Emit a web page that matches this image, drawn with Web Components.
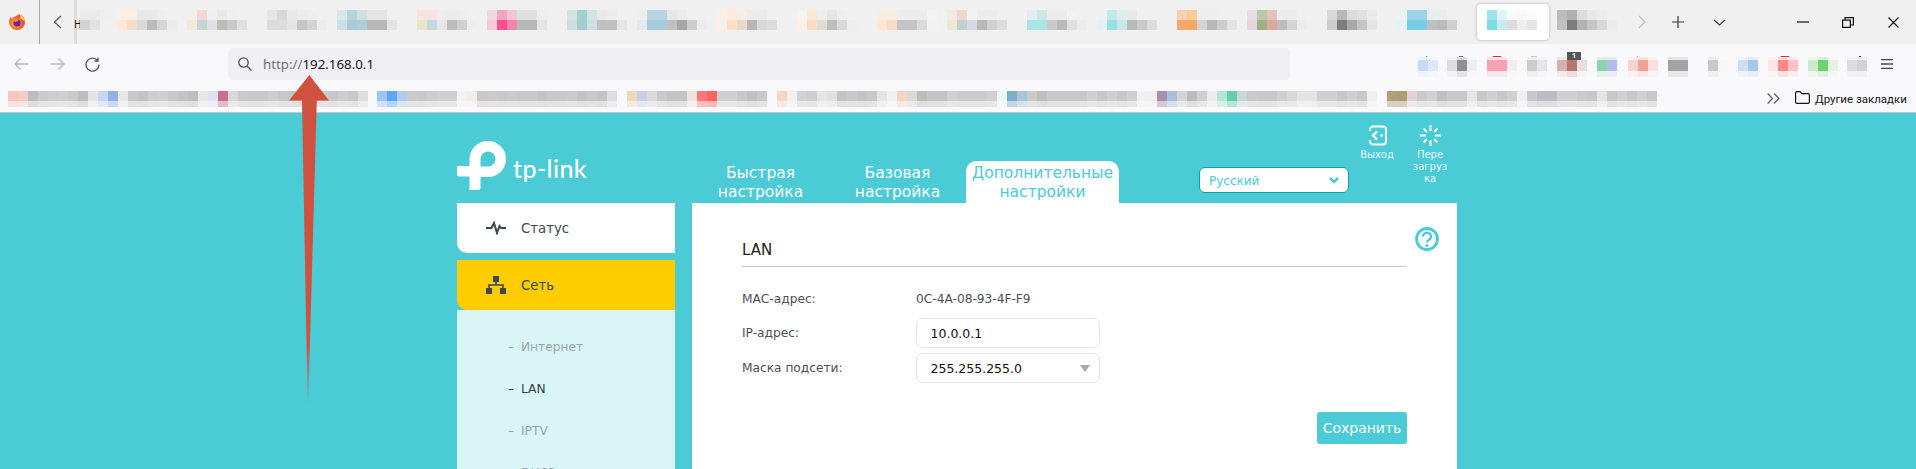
<!DOCTYPE html>
<html lang="ru"><head><meta charset="utf-8"><title>LAN</title>
<style>
html,body{margin:0;padding:0;height:469px;width:1916px;overflow:hidden;background:#4acbd6;font-family:"DejaVu Sans",sans-serif}
</style></head><body>
<browser-chrome></browser-chrome>
<router-page></router-page>
<red-arrow></red-arrow>
<script>
function mix(hex,bg,t){const p=s=>[1,3,5].map(i=>parseInt(s.substr(i,2),16));const a=p(hex),b=p(bg);return '#'+a.map((v,i)=>Math.round(v+(b[i]-v)*t).toString(16).padStart(2,'0')).join('')}
class PixelMosaic extends HTMLElement{
  connectedCallback(){
    const cell=+(this.getAttribute('cell')||10);
    const rows=this.getAttribute('colors').split('|').map(r=>r.trim().split(/\s+/));
    const hs=(this.getAttribute('heights')||'10,10').split(',');
    const s=this.attachShadow({mode:'open'});
    let h='<style>:host{display:block;flex:none}.r{display:flex}.r i{display:block;flex:none;width:'+cell+'px}</style>';
    rows.forEach((r,k)=>{h+='<div class="r" style="height:'+hs[k]+'px">'+r.map(c=>'<i style="background:#'+c+'"></i>').join('')+'</div>'});
    s.innerHTML=h;
  }
}
customElements.define('pixel-mosaic',PixelMosaic);

const TABS=[
[80,37,'ebebeb ebebeb efefef','d4d4d4 e2e2e2 f0f0f0'],
[117,70,'fbeee3 fbeee3 e9e9e9 e9e9e9 eeeeee f0f0f0','ffe9d5 f5dcc8 dadada bbbbbb d5d5d5 ececec'],
[187,80,'f6eeee f3d5d5 efefef e9e9e9 efefef f0f0f0','f0ebd6 c5d5d3 dfdfe6 bcbcbc c8c8c8 e0e0e0'],
[267,70,'e6e6e6 d8d8d8 e8e8e8 ececec eeeeee f0f0f0','dcdcdc dcdcdc e5e5e5 c6c6c6 d2d2d2 ececec'],
[337,80,'d8e7ea b5d3dc cde0e3 e4e4e4 e4e4e4 f0f0f0','cbe0e6 a9cbd9 aecdd9 b8b8b8 b8b8b8 e4e4e4'],
[417,70,'f4e4e4 f4e4e4 eeeeee ececec eeeeee f0f0f0','ebe5c8 c7d7e4 e6e6e6 bcbcbc cfcfcf eeeeee'],
[487,80,'f0d8e0 efa7c0 efc6d7 e0e0e0 e0e0e0 eeeeee','f3cbd7 fb4f8d f584ad b8b8b8 b8b8b8 e4e4e4'],
[567,70,'d2e4e1 a3cfcf d2e3e3 e9e9e9 ececec f0f0f0','ccdede a5cdd1 cde0e0 c0c0c0 c0c0c0 e5e5e5'],
[637,80,'eeeeee b9d4df b9d4df e4e8ea ececec f0f0f0 f0f0f0','e1eaec a8cbdc a8cbdc c0c0c0 a6a6a6 cdcdcd ececec'],
[717,80,'f6f0e9 fbeadd f3eee8 ebebeb ebebeb f0f0f0','f7f0e8 fedfc4 e9d9cb b6b6b6 d8d8d8 dcdcdc f0f0f0'],
[797,80,'f6f2ec fae7d6 eeeeee e6e6e6 eeeeee f0f0f0','f9f0e5 fbdcc1 e1dbd4 bdbdbd d9d9d9 eeeeee'],
[877,70,'f9ece0 f9ece0 ededed ededed ededed f3f3f3','fee6d0 f6dcc8 c4c4c4 c4c4c4 dadada f2f2f2'],
[947,80,'f3e7e7 f1d5d3 f2f2f2 ededed ededed f0f0f0','ede9cf c2d1d0 d5dbe3 b8b8b8 d0d0d0 dcdcdc'],
[1027,70,'e0eeee c8e9e7 ebebeb ebebeb f2f2f2 f0f0f0','aae5e6 aae5e6 cacaca b9b9b9 e0e0e0 ececec'],
[1097,80,'f0f0f0 c2e9ea dceeee e8e8e8 f0f0f0 f0f0f0','e4f1f2 95e2e3 cae6e6 bababa c9c9c9 dcdcdc'],
[1177,70,'f5d3b0 f5cd95 eeeeee eeeeee f0f0f0 f0f0f0','f6a76d f6a862 d4d4d4 b8b8b8 cdcdcd e2e2e2'],
[1247,80,'e8dde4 bcc8a6 e7c0bc ededed ededed f0f0f0','e5d5dc 9fb287 e0a6a0 bdbdbd d4d4d4 ececec'],
[1327,70,'d8d8d8 b8b8b8 dcdcdc e0e0e0 eaeaea f0f0f0','cccccc 7d7d7d a8a8a8 c5c5c5 e5e5e5 f0f0f0'],
[1397,80,'f0f0f0 9ed4e8 9ed4e8 e6eef1 ececec f0f0f0','e5f1f4 78cdea 78cdea bbbfc0 bbbbbb d0d0d0'],
[1477,80,'9fe4e8 def5f6 fafafa f8f8f8 fbfbfb','7cdcdf c7ecee dcdcdc eeeeee e5e5e5'],
[1557,73,'bcbcbc b0b0b0 dcdcdc e8e8e8 ededed f0f0f0','c0c0c0 7d7d7d b2b2b2 c5c5c5 d8d8d8 ececec']
];
class TabBar extends HTMLElement{
  constructor(){super();const s=this.attachShadow({mode:'open'});
  const cells=TABS.map((t,i)=>{const act=t[0]===1477;
    return `<div class="tab${act?' act':''}" style="width:${t[1]}px"><pixel-mosaic colors="${t[2]}|${t[3]}"></pixel-mosaic></div>`}).join('');
  s.innerHTML=`<style>
  :host{display:flex;height:44px;background:#f0f0f0;align-items:stretch;color:#3a3a40}
  .fx{width:39px;flex:none;border-right:1px solid #a9a9a9;display:flex;align-items:center;justify-content:center}
  .fx svg{margin-left:-5px}
  .bk{width:34px;flex:none;display:flex;align-items:center;justify-content:center}
  .cut{width:6px;flex:none;overflow:hidden;background:linear-gradient(90deg,#dcdcdc 0 3px,transparent 3px);font:10px/48px "Noto Sans",sans-serif;color:#111;text-align:left}
  .strip{display:flex;width:1550px;flex:none}
  .tab{flex:none;box-sizing:border-box;padding-top:10px}
  .act{padding:0;position:relative}
  .act pixel-mosaic{position:relative}
  .act::before{content:"";display:block;width:72px;height:36px;margin:4px 0 -30px;background:#fff;border-radius:4px;box-shadow:0 0 3px rgba(0,0,0,.3)}
  .act pixel-mosaic{margin-left:10px}
  .btn{flex:none;display:flex;align-items:center;justify-content:center}
  .sp{flex:1}
  svg{display:block;fill:none;stroke:currentColor;stroke-width:1.2}
  </style>
  <div class="fx"><svg width="18" height="18" viewBox="0 0 18 18" style="stroke:none"><defs><radialGradient id="g" cx=".4" cy=".6" r=".7"><stop offset="0" stop-color="#ffbd2e"/><stop offset=".55" stop-color="#ff6a1f"/><stop offset="1" stop-color="#e3127b"/></radialGradient></defs><path d="M11 1c3.500 1.500 6 4.500 6 8a8 8 0 1 1-16 0c0-2 .8-4 2-5l1 2c1-2 3-2.500 4-3 1.500-.5 2.500-1 3-2z" fill="url(#g)"/><path d="M11 1c3 1.500 6 4.500 6 8-1-1.500-2.500-3-5-3.500.5-1.500 0-3-1-4.500z" fill="#ffd23a"/><circle cx="9" cy="10" r="3.600" fill="#5b2bb5"/><path d="M5 8c1-2 4-2 6-1l-3 2z" fill="#ff8a2a"/></svg></div>
  <div class="bk"><svg width="9" height="14" viewBox="0 0 9 14" style="color:#5b5b66;stroke-width:1.300"><path d="M8 1 1.500 7 8 13"/></svg></div>
  <div class="cut">Н</div>
  <div class="strip">${cells}</div>
  <div class="btn" style="width:24px;color:#bdbdc2"><svg width="8" height="14" viewBox="0 0 8 14"><path d="M1 1 7 7 1 13"/></svg></div>
  <div class="btn" style="width:48px"><svg width="14" height="14" viewBox="0 0 14 14"><path d="M7 1V13M1 7H13"/></svg></div>
  <div class="btn" style="width:34px"><svg width="13" height="7" viewBox="0 0 13 7"><path d="M1 1 6.500 6 12 1"/></svg></div>
  <div class="sp"></div>
  <div class="btn" style="width:45px;color:#111"><svg width="12" height="2" viewBox="0 0 12 2"><path d="M0 1H12"/></svg></div>
  <div class="btn" style="width:46px;color:#111"><svg width="12" height="11" viewBox="0 0 12 11"><path d="M.6 3.100H8.300V10.400H.6ZM3 3V.6H11.400V8H8.300"/></svg></div>
  <div class="btn" style="width:45px;color:#111"><svg width="11" height="11" viewBox="0 0 11 11"><path d="M.5.5 10.500 10.500M10.500.5.5 10.500"/></svg></div>`;}
}
customElements.define('tab-bar',TabBar);

const TOOLS=[
[29,'c9daf5 dfe9f8','#2a6fe0',8,1],
[40,'dddddd 8f8f98 eeeeee','#777',12,4],
[40,'f5a0b3 f5a0b3 f5eef0','#f22',6,8],
[30,'cccccc e5e5e5','#ccc',4,6],
[40,'d4b0b0 b87575 e9dede','',0,0],
[31,'8ed3ab b2bce6','',0,0],
[40,'f7d3d0 f2a197 f9e0de','#f88',9,1],
[40,'a3a3a3 a3a3a3','',0,0],
[30,'c8c8c8 f7f7f7','',0,0],
[30,'cfdcf2 a8c6ec','',0,0],
[40,'fbe6e6 ff8888 ffc2c2','#f22',13,8],
[39,'cdeacb 6fd26f e3f2e3','',0,0],
[40,'dcdce0 d2d2d6','#555',12,2]
];
class NavToolbar extends HTMLElement{
  constructor(){super();const s=this.attachShadow({mode:'open'});
  const items=TOOLS.map((t,i)=>{const top=t[1].split(' ').map(c=>mix('#'+c,'#f9f9fb',.75).slice(1)).join(' ');
    const bot=t[1].split(' ').map(c=>mix('#'+c,'#f9f9fb',.8).slice(1)).join(' ');
    const dot=t[2]?`<b style="background:${t[2]};left:${t[3]}px;width:${t[4]}px"></b>`:'';
    const badge=i===4?'<em>1</em>':'';
    return `<div class="it" style="width:${t[0]}px">${dot}${badge}<pixel-mosaic colors="${top}|${t[1]}|${bot}" heights="3,11,6"></pixel-mosaic></div>`}).join('');
  s.innerHTML=`<style>
  :host{display:flex;height:46px;background:#f9f9fb;box-sizing:border-box;padding:4px 0 10px 4px;align-items:stretch}
  .nb{width:35.500px;flex:none;display:flex;align-items:center;justify-content:center}
  svg{display:block;fill:none;stroke:currentColor;stroke-width:1.300}
  .url{flex:none;margin-left:117.500px;width:1062px;background:#f0f0f4;border-radius:4px;display:flex;align-items:center;box-sizing:border-box;padding-left:10px;font:13.300px "Noto Sans",sans-serif;color:#15141a}
  .url svg{margin-right:11px;color:#4d4d55}
  .url span{color:#6e6e76}
  .tools{flex:none;margin-left:128px;display:flex;align-items:flex-start;padding-top:9px}
  .it{position:relative;flex:none}
  .it b{position:absolute;top:-1px;height:1px;display:block}
  .it em{position:absolute;z-index:1;left:10px;top:-5px;width:14px;height:8px;background:#555;color:#fff;font:bold 7px/8px "Noto Sans",sans-serif;text-align:center}
  .ham{flex:none;margin-left:-6px;display:flex;align-items:center;color:#45454d}
  </style>
  <div class="nb" style="color:#b9b9be"><svg width="15" height="12" viewBox="0 0 15 12"><path d="M14.500 6H1M6.500.5 1 6l5.500 5.500"/></svg></div>
  <div class="nb" style="color:#b9b9be"><svg width="15" height="12" viewBox="0 0 15 12"><path d="M.5 6H14M8.500.5 14 6l-5.500 5.500"/></svg></div>
  <div class="nb" style="color:#55555e"><svg width="15" height="15" viewBox="0 0 15 15"><path d="M12.500 3.500A6.500 6.500 0 1 0 14 7.500M13 .5V4H9.500"/></svg></div>
  <div class="url"><svg width="14" height="14" viewBox="0 0 14 14"><circle cx="5.500" cy="5.500" r="4.700"/><path d="M9 9 13.500 13.500"/></svg><div><span>http://</span>192.168.0.1</div></div>
  <div class="tools">${items}</div>
  <div class="ham"><svg width="12" height="10" viewBox="0 0 12 10"><path d="M0 .7H12M0 5H12M0 9.300H12"/></svg></div>`;}
}
customElements.define('nav-toolbar',NavToolbar);

const BM=[
[8,'f7c4be f4cbc6 bdbdbd cacaca cecece d0d0d0 cacaca bebebe e4e4e4 c4d8f6 90b0e6 e8e8e8 c8c8c8 c4c4c4 cecece d0d0d0 c8c8c8 c4c4c4 bebebe e8e8e8 e0e0f0 c96f90 d8d8d8 cacaca c8c8c8 c8c8c8 cecece c8c8c8 c4c4c4 c4c4c4 c8c8c8 cccccc c8c8c8 cecece c8c8c8 dedede'],
[377,'9cc4f8 5da6fb b0cbec cacaca c8c8c8 cdcdcd d0d0d0 d0d0d0 f2f2f2 f3eeee cfc6c6 cacaca c8c8c8 cacaca c8c8c8 c8c8c8 c4c4c4 c8c8c8 c8c8c8 cacaca c4c4c4 c8c8c8 c4c4c4 dedede'],
[627,'ecd9b8 c8d0e4 dadada cacaca c4c4c4 c4c4c4 f2e0e0 ff7878 ff6464 d0d0d0 d0d0d0 c8c8c8 c0c0c0 c8c8c8'],
[777,'f4d6c4 f6eeee d2d2d2 cecece e4e4e4 e0e0e0 c4c4c4 c8c8c8 c4c4c4 c8c8c8 e4e4e4 f5f0f0 f4d5c4 dcd8d4 bcbcbc c4c4c4 c4c4c4 d0d0d0 cccccc cccccc cccccc d0d0d0 f0f5f8 7eaecb a8c4d8 cacaca bebebe c8c8c8 c8c8c8 c8c8c8 c8c8c8 d0d0d0 c8c8c8 d0d0d0 c8c8c8 d0d0d0 f0f0f0 f4eef0 a890ac a8c0dc d4d4d8 bcbcbc d0d0d0 ececec b2e5d4 64cdaa c8d8d4 cacaca c8c8c8 c8c8c8 d0d0d0 d8d8d8 e4e4e4 e4e4e4 d0d0d0 d0d0d0 c8c8c8 d0d0d0 c8c8c8 f0f0f0'],
[1387,'b0a078 b09e70 e0d0d8 cacaca d0d0d0 c0c0c0 c8c8c8 c8c8c8 e4e4e4 c8c8c8 d0d0d0 c8c8c8 d0d0d0 f0f0f0 c8c8d0 bcbcc4 bcbcc4 d0d0d0 d0d0d0 cacaca c8c8c8 e4e4e4 c8c8c8 d0d0d0 c8c8c8 d0d0d0 c8c8c8']
];
class BookmarksBar extends HTMLElement{
  constructor(){super();const s=this.attachShadow({mode:'open'});
  let x=0;const seg=BM.map(b=>{const cols=b[1].split(' ');const ml=b[0]-x;x=b[0]+cols.length*10;
    const bot=cols.map(c=>mix('#'+c,'#f9f9fb',.55).slice(1)).join(' ');
    return `<pixel-mosaic style="margin-left:${ml}px" colors="${b[1]}|${bot}" heights="10,6"></pixel-mosaic>`}).join('');
  s.innerHTML=`<style>
  :host{display:flex;height:23px;box-sizing:border-box;background:#f9f9fb;border-bottom:1px solid #c4c4c8;padding-top:1px;position:relative}
  .segs{display:flex;flex:none;width:1767px}
  .more{flex:none;width:28px;color:#5b5b66;padding-top:2px}
  svg{display:block;fill:none;stroke:currentColor;stroke-width:1.200}
  .oth{flex:none;display:flex;align-items:flex-start;font:11.500px/16px Roboto,sans-serif;color:#15141a}
  .oth svg{margin-right:5px}
  </style>
  <div class="segs">${seg}</div>
  <div class="more"><svg width="13" height="11" viewBox="0 0 13 11"><path d="M.7.5 5.500 5.500.7 10.500M7 .5 12 5.500 7 10.500"/></svg></div>
  <div class="oth"><svg width="15" height="13" viewBox="0 0 15 13"><path d="M.6 11V2A1.400 1.400 0 0 1 2 .6H5L7 2.600H13A1.400 1.400 0 0 1 14.400 4V11A1.400 1.400 0 0 1 13 12.400H2A1.400 1.400 0 0 1 .6 11Z"/></svg><span>Другие закладки</span></div>`;}
}
customElements.define('bookmarks-bar',BookmarksBar);

class BrowserChrome extends HTMLElement{
  constructor(){super();this.attachShadow({mode:'open'}).innerHTML=`<style>:host{display:block}</style><tab-bar></tab-bar><nav-toolbar></nav-toolbar><bookmarks-bar></bookmarks-bar>`}
}
customElements.define('browser-chrome',BrowserChrome);

class RouterHeader extends HTMLElement{
  constructor(){super();this.attachShadow({mode:'open'}).innerHTML=`<style>
  :host{display:flex;height:90px;align-items:flex-end;color:#fff;font-family:"DejaVu Sans",sans-serif}
  .logo{flex:none;width:235px;height:61px;display:flex;align-items:flex-start;box-sizing:border-box}
  .logo svg{display:block;flex:none}
  .logo span{font:500 25px/30px Lato,sans-serif;margin:11px 0 0 6px;letter-spacing:.4px}
  .tab{flex:none;text-align:center;font-size:15.500px;line-height:19px;box-sizing:border-box;height:42px;padding-top:3px;white-space:nowrap}
  .on{background:#fff;color:#4acbd6;border-radius:10px 10px 0 0}
  .lang{flex:none;align-self:flex-start;margin:54px 0 0 80px;width:150px;height:26px;box-sizing:border-box;background:#fff;border:1px solid #0aa3ab;border-radius:6px;color:#4acbd6;font-size:12px;display:flex;align-items:center;justify-content:space-between;padding:1px 9px 0}
  .lang svg{display:block}
  .act{flex:none;align-self:flex-start;width:54px;margin-top:12px;text-align:center;font-size:10px;line-height:12px;display:flex;flex-direction:column;align-items:center;color:#e9fbfc}
  .act svg{display:block;margin-bottom:3px;fill:none;stroke:#fff}
  .first{margin-left:1px}
  </style>
  <div class="logo"><svg width="50" height="50" viewBox="457 142 50 50" style="margin-top:-1px"><path fill="#fff" fill-rule="evenodd" d="M457 167H469.500V160A18.500 18 0 0 1 488 142A18 18 0 0 1 488 178H480.500V189a2 2 0 0 1-2 2H469.500V177.500H459a2 2 0 0 1-2-2ZM480.500 167.500H488A7.500 7.500 0 0 0 488 152.500A7.500 7.500 0 0 0 480.500 160Z"/></svg><span>tp-link</span></div>
  <div class="tab" style="width:137px">Быстрая<br>настройка</div>
  <div class="tab" style="width:137px">Базовая<br>настройка</div>
  <div class="tab on" style="width:153px">Дополнительные<br>настройки</div>
  <div class="lang"><span>Русский</span><svg width="10" height="7" viewBox="0 0 10 7"><path d="M1 1 5 5 9 1" fill="none" stroke="#4acbd6" stroke-width="2.500"/></svg></div>
  <div class="act first"><svg width="19" height="21" viewBox="0 0 19 21" stroke-width="1.800"><path d="M5 1.500H15a3 3 0 0 1 3 3V16.500a3 3 0 0 1-3 3H5a3 3 0 0 1-3-3V15M2 6V4.500a3 3 0 0 1 3-3"/><path d="M9 6.500 5 10.500 9 14.500" stroke-width="2.200"/><path d="M12 10.500H15" stroke-width="2"/></svg><div>Выход</div></div>
  <div class="act" style="margin-left:-1px"><svg width="21" height="21" viewBox="0 0 21 21" stroke-width="2"><path d="M10.500 0V6M10.500 15V21M0 10.500H6M15 10.500H21M3.500 3.500 6.800 6.800M14.200 14.200 17.500 17.500M17.500 3.500 14.200 6.800M6.800 14.200 3.500 17.500"/></svg><div>Пере<br>загруз<br>ка</div></div>`}
}
customElements.define('router-header',RouterHeader);

class SideNav extends HTMLElement{
  constructor(){super();this.attachShadow({mode:'open'}).innerHTML=`<style>
  :host{display:block;flex:none;width:218px;font-family:"DejaVu Sans",sans-serif}
  .item{height:50px;display:flex;align-items:center;padding-left:29px;box-sizing:border-box;font-size:13.300px;color:#3c4650;background:#fff;border-radius:0 0 0 10px}
  .item svg{display:block;margin-right:15px;flex:none}
  .y{background:#ffcc00;margin-top:7px}
  .sub{background:#d9f5f6;padding-top:16px;height:200px;box-sizing:border-box}
  .sub div{height:42px;display:flex;align-items:center;padding-left:51px;font-size:12.200px;color:#9aa6aa;white-space:pre}
  .sub i{font-style:normal;width:13px;flex:none}
  .sub .cur{color:#333d47}
  </style>
  <div class="item"><svg width="20" height="14" viewBox="0 0 20 14"><path d="M0 7H5.500L8 2 11 12 13.500 5 15 7H20" fill="none" stroke="#3c4650" stroke-width="2"/></svg>Статус</div>
  <div class="item y"><svg width="20" height="18" viewBox="0 0 20 18" fill="#3c4650"><rect x="7" y="0" width="6" height="6"/><rect x="0" y="12" width="6" height="6"/><rect x="14" y="12" width="6" height="6"/><rect x="9.200" y="6" width="1.600" height="3"/><path d="M2.200 12V8.200H17.800V12H16.200V9.800H3.800V12Z"/></svg>Сеть</div>
  <div class="sub"><div><i>–</i>Интернет</div><div class="cur"><i>–</i>LAN</div><div><i>–</i>IPTV</div><div><i>–</i>DHCP</div></div>`}
}
customElements.define('side-nav',SideNav);

class FormRow extends HTMLElement{
  constructor(){super();this.attachShadow({mode:'open'}).innerHTML=`<style>
  :host{display:flex;align-items:center;font:12.200px "DejaVu Sans",sans-serif;color:#4a5058}
  .l{width:174px;flex:none}
  </style><div class="l"><slot name="label"></slot></div><slot></slot>`}
}
customElements.define('form-row',FormRow);

class FieldBox extends HTMLElement{
  constructor(){super();this.attachShadow({mode:'open'}).innerHTML=`<style>
  :host{display:flex;align-items:center;justify-content:space-between;width:184px;height:30px;box-sizing:border-box;border:1px solid #e6e6e6;border-radius:6px;background:#fff;padding:0 9px 0 13.500px;color:#111;font:12.500px "DejaVu Sans",sans-serif}
  .a{display:none;width:0;height:0;border:5.500px solid transparent;border-top:7px solid #a9a9a9;border-bottom:0}
  :host([select]) .a{display:block}
  </style><span><slot></slot></span><i class="a"></i>`}
}
customElements.define('field-box',FieldBox);

class LanCard extends HTMLElement{
  constructor(){super();this.attachShadow({mode:'open'}).innerHTML=`<style>
  :host{display:block;flex:none;width:765px;height:266px;background:#fff;box-sizing:border-box;padding:34px 50px 0 50px;position:relative;font-family:"DejaVu Sans",sans-serif}
  h2{margin:0;font-size:15px;font-weight:400;color:#222;line-height:26px;height:28px;border-bottom:1px solid #ccc;box-sizing:content-box;padding-bottom:1px}
  .help{position:absolute;left:723px;top:24px;display:block}
  form-row.mac{margin-top:20px;height:24px}
  form-row.ip{margin-top:7px}
  form-row.mask{margin-top:5px}
  .save{display:block;margin:29px 0 0 auto;width:90px;height:32px;background:#4acbd6;border-radius:3px;color:#fff;font-size:14px;line-height:32px;text-align:center}
  </style>
  <svg class="help" width="24" height="24" viewBox="0 0 24 24"><circle cx="12" cy="12" r="10.500" fill="none" stroke="#4acbd6" stroke-width="2.800"/><path d="M8 9.500A4 3.800 0 1 1 14 12.800C12.500 13.600 12 14 12 15.500" fill="none" stroke="#4acbd6" stroke-width="2.400"/><circle cx="12" cy="18.500" r="1.500" fill="#4acbd6"/></svg>
  <h2>LAN</h2>
  <form-row class="mac"><span slot="label">МАС-адрес:</span>0C-4A-08-93-4F-F9</form-row>
  <form-row class="ip"><span slot="label">IP-адрес:</span><field-box>10.0.0.1</field-box></form-row>
  <form-row class="mask"><span slot="label">Маска подсети:</span><field-box select>255.255.255.0</field-box></form-row>
  <div class="save">Сохранить</div>`}
}
customElements.define('lan-card',LanCard);

class RouterPage extends HTMLElement{
  constructor(){super();this.attachShadow({mode:'open'}).innerHTML=`<style>
  :host{display:block;background:#4acbd6;height:356px;padding-left:457px;overflow:hidden;box-sizing:border-box}
  .main{display:flex;gap:17px;align-items:flex-start}
  </style><router-header></router-header><div class="main"><side-nav></side-nav><lan-card></lan-card></div>`}
}
customElements.define('router-page',RouterPage);

class RedArrow extends HTMLElement{
  constructor(){super();this.attachShadow({mode:'open'}).innerHTML=`<style>
  :host{position:absolute;left:280px;top:70px;width:60px;height:340px;display:block;pointer-events:none}
  svg{display:block}
  </style><svg width="60" height="340" viewBox="280 70 60 340"><defs><linearGradient id="f" x1="0" y1="0" x2="0" y2="1"><stop offset=".82" stop-color="#d1513f"/><stop offset="1" stop-color="#d1513f" stop-opacity=".2"/></linearGradient></defs><path fill="url(#f)" d="M309.300 75 329 100.500H316.800L308.200 403H307.600L302 100.500H289Z"/></svg>`}
}
customElements.define('red-arrow',RedArrow);
</script>
</body></html>
